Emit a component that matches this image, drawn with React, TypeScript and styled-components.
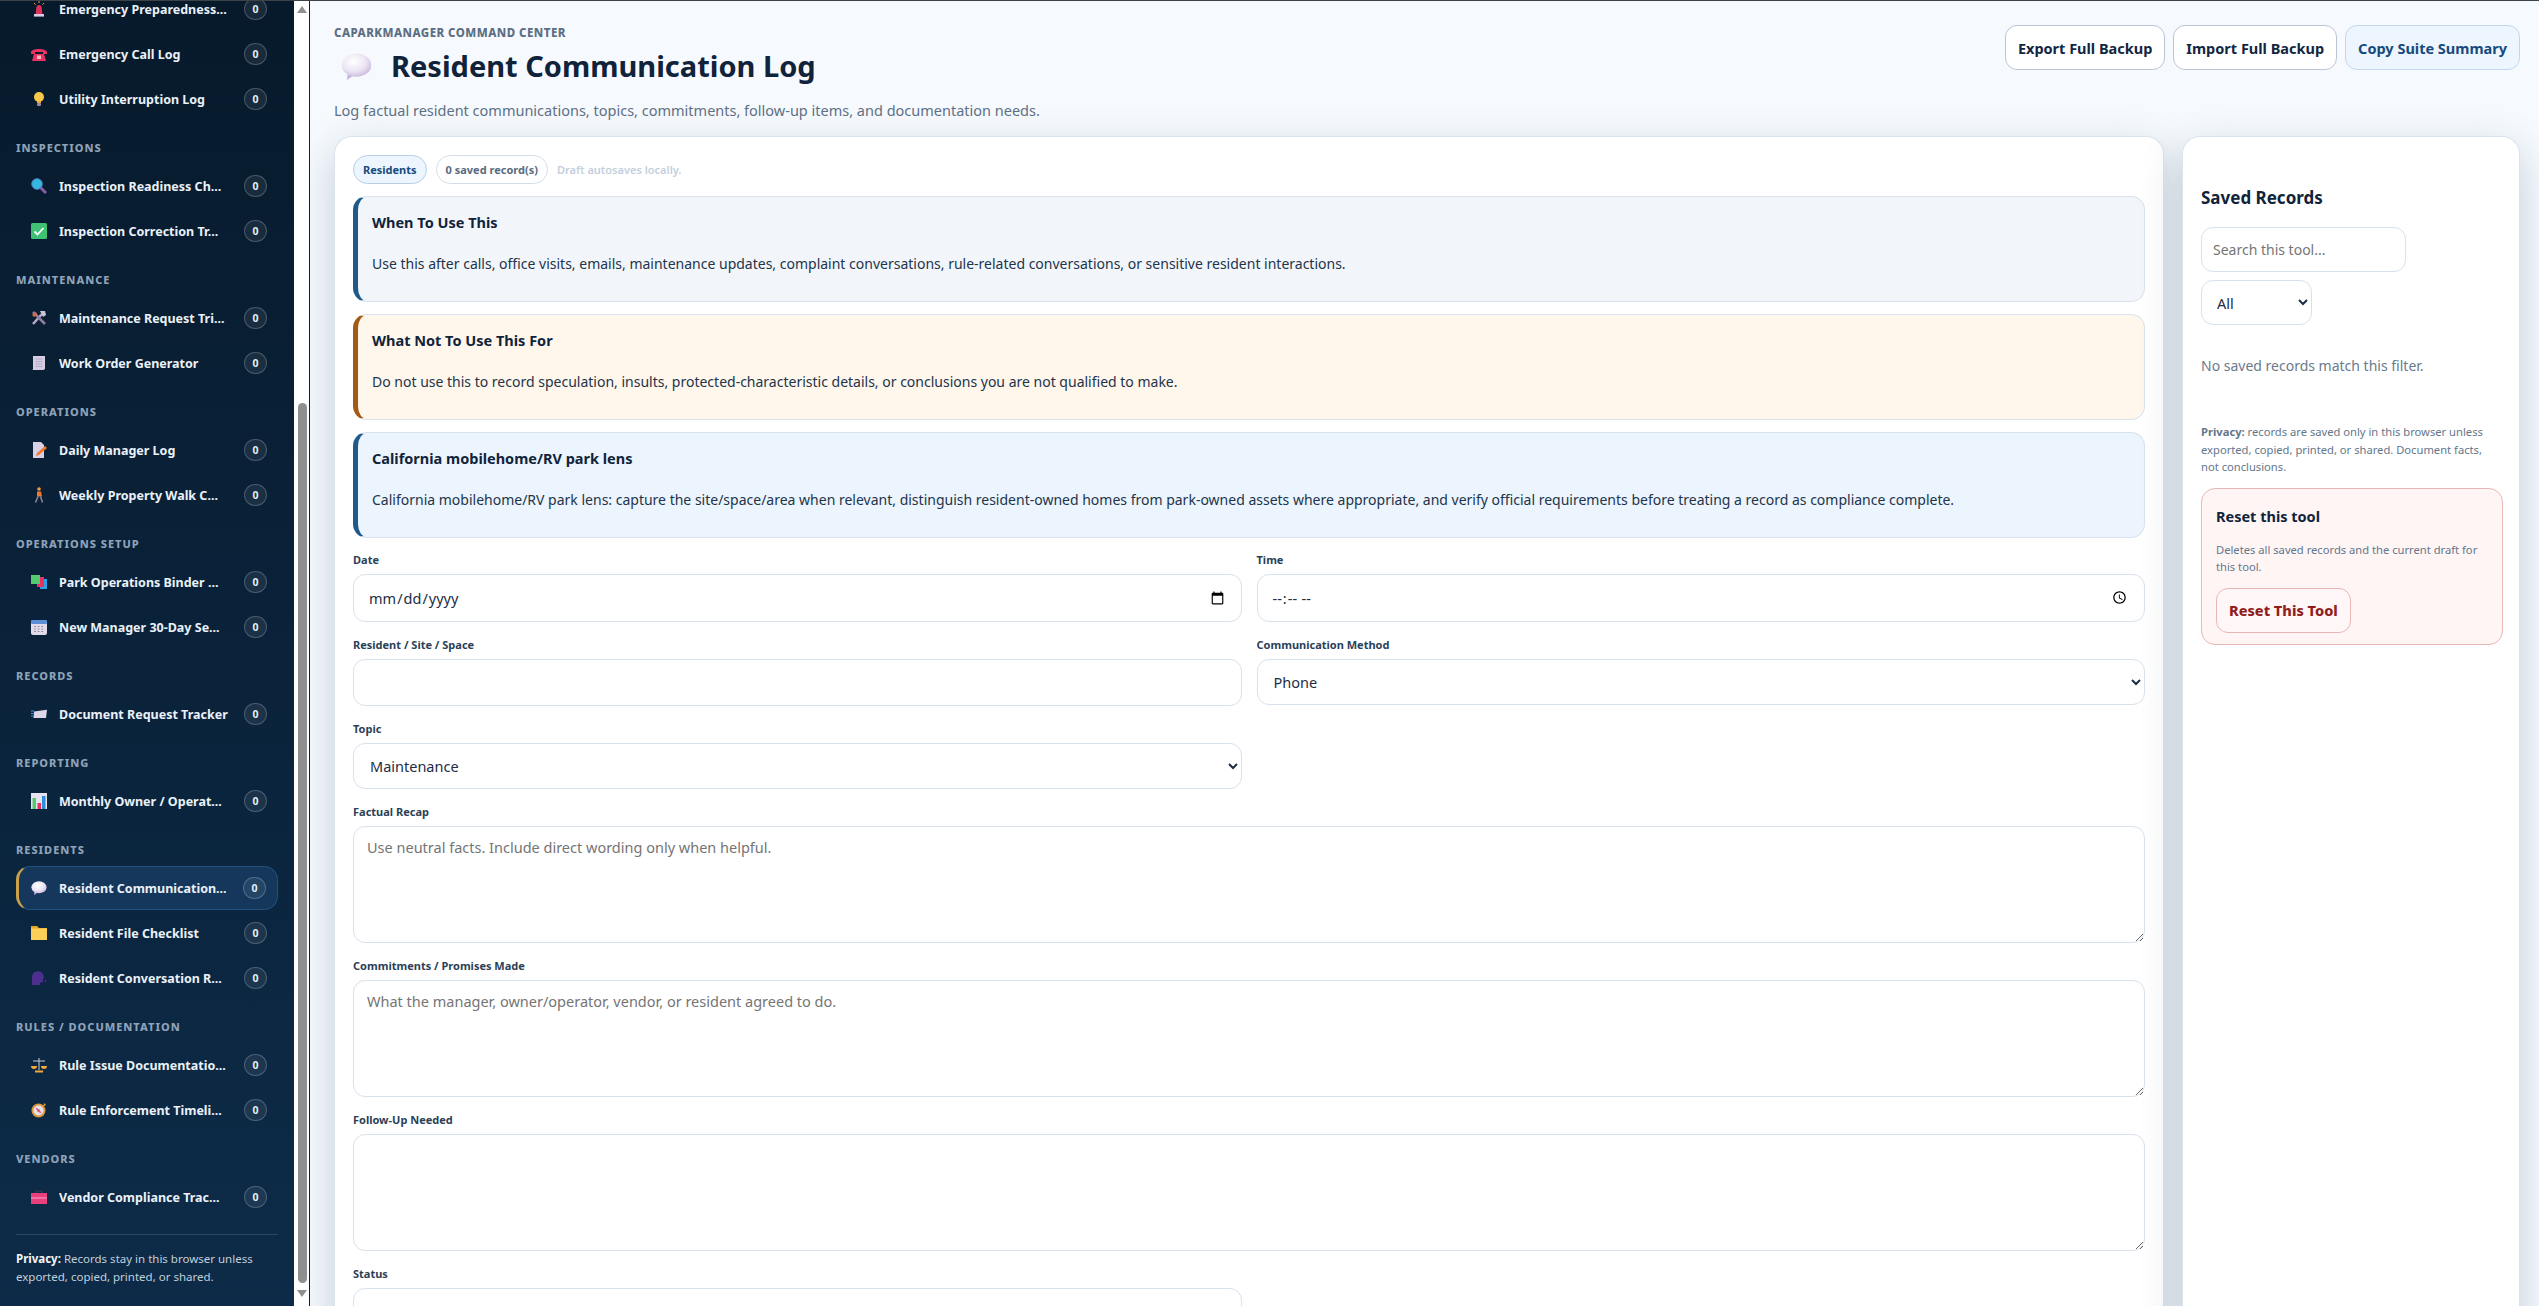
import { FC, ReactNode } from "react";
import styled, { createGlobalStyle } from "styled-components";

const FONT = `"Noto Sans", "Open Sans", Arial, sans-serif`;

const GlobalStyle = createGlobalStyle`
  * { box-sizing: border-box; }
  html, body { margin: 0; padding: 0; height: 100%; overflow: hidden; }
  body { font-family: ${FONT}; border-top: 1px solid #3c4347; background: #f6fafe; }
`;

const Shell = styled.div`
  display: flex;
  height: calc(100vh - 1px);
  overflow: hidden;
`;

const SidebarWrap = styled.aside`
  display: flex;
  width: 310px;
  flex: none;
  border-right: 1px solid #0b2036;
`;

const Sidebar = styled.div`
  width: 294px;
  flex: none;
  overflow: hidden;
  padding: 0 16px;
  background: linear-gradient(180deg, #071a2c 0%, #0d2b48 100%);
`;

const SideList = styled.nav`
  margin-top: -14px;
  display: flex;
  flex-direction: column;
`;

const SectionLabel = styled.div`
  margin: 20px 0 9px;
  font-size: 11px;
  line-height: 14px;
  font-weight: 800;
  letter-spacing: 0.09em;
  text-transform: uppercase;
  color: #8ea2b8;
`;

const NavGroup = styled.div`
  display: flex;
  flex-direction: column;
  gap: 1px;
`;

const NavItem = styled.a<{ $active?: boolean }>`
  display: flex;
  align-items: center;
  height: 44px;
  padding: 0 11px 0 ${(p) => (p.$active ? "12px" : "15px")};
  border-radius: 14px;
  border: ${(p) => (p.$active ? "1px solid #21507c" : "none")};
  border-left: ${(p) => (p.$active ? "3px solid #c9a24a" : "none")};
  background: ${(p) => (p.$active ? "#14375b" : "transparent")};
  color: #eaf1f8;
`;

const NavText = styled.span`
  flex: 1;
  min-width: 0;
  margin-left: 12px;
  font-size: 12.5px;
  font-weight: 700;
  white-space: nowrap;
  overflow: hidden;
`;

const CountBadge = styled.span`
  flex: none;
  width: 23px;
  height: 22px;
  display: flex;
  align-items: center;
  justify-content: center;
  border-radius: 11px;
  border: 1px solid rgba(255, 255, 255, 0.2);
  background: rgba(255, 255, 255, 0.07);
  font-size: 10.5px;
  font-weight: 700;
  color: #e6edf5;
`;

const SideFooter = styled.div`
  margin-top: 15px;
  padding-top: 15px;
  border-top: 1px solid #2a4663;
  font-size: 11.5px;
  line-height: 18px;
  color: #c3cfdb;

  strong { color: #f3f6fa; }
`;

const ScrollRail = styled.div`
  width: 15px;
  flex: none;
  background: #fff;
  display: flex;
  flex-direction: column;
  align-items: center;
  padding: 5px 0 0 1px;
`;

const ScrollArrow = styled.span<{ $down?: boolean }>`
  width: 0;
  height: 0;
  border-left: 5px solid transparent;
  border-right: 5px solid transparent;
  border-${(p) => (p.$down ? "top" : "bottom")}: 7px solid #8f8f8f;
`;

const ScrollThumb = styled.span`
  width: 9px;
  height: 880px;
  margin: 390px 0 7px;
  border-radius: 5px;
  background: #8f8f8f;
`;

const Main = styled.main`
  flex: 1;
  min-width: 0;
  overflow: hidden;
  padding: 24px 19px 0 24px;
  background: #f6fafe;
`;

const PageHeader = styled.header`
  display: flex;
  justify-content: space-between;
  align-items: flex-start;
  margin-bottom: 16px;
`;

const Kicker = styled.div`
  font-size: 11.5px;
  line-height: 16px;
  font-weight: 800;
  letter-spacing: 0.04em;
  text-transform: uppercase;
  color: #5d6f84;
`;

const TitleRow = styled.div`
  display: flex;
  align-items: center;
  gap: 19px;
  margin: 5px 0 14px 7px;
`;

const PageTitle = styled.h1`
  margin: 0;
  font-size: 29px;
  line-height: 40px;
  font-weight: 700;
  color: #10233a;
`;

const Subtitle = styled.p`
  margin: 0;
  font-size: 14.5px;
  line-height: 20px;
  color: #5f7186;
`;

const HeaderActions = styled.div`
  display: flex;
  gap: 8px;
`;

const ActionButton = styled.button<{ $primary?: boolean }>`
  height: 45px;
  padding: 0 12px;
  border-radius: 12px;
  border: 1px solid ${(p) => (p.$primary ? "#c3d7ec" : "#b9c5d5")};
  background: ${(p) => (p.$primary ? "#edf5fe" : "#fff")};
  color: ${(p) => (p.$primary ? "#174a7c" : "#13263f")};
  font-family: ${FONT};
  font-size: 14.5px;
  font-weight: 700;
`;

const Columns = styled.div`
  display: grid;
  grid-template-columns: 1fr 338px;
  gap: 18px;
`;

const Card = styled.section`
  min-height: 1300px;
  padding: 18px;
  background: #fff;
  border: 1px solid #dbe3ec;
  border-bottom: none;
  border-radius: 18px 18px 0 0;
  box-shadow: 0 14px 40px rgba(20, 45, 75, 0.22);
`;

const PillRow = styled.div`
  display: flex;
  align-items: center;
  gap: 9px;
  margin-bottom: 12px;
`;

const Pill = styled.span<{ $accent?: boolean }>`
  height: 29px;
  display: flex;
  align-items: center;
  padding: 0 9px;
  border-radius: 15px;
  border: 1px solid ${(p) => (p.$accent ? "#b7cfe6" : "#d5dee8")};
  background: ${(p) => (p.$accent ? "#edf5fe" : "#fff")};
  color: ${(p) => (p.$accent ? "#174a7c" : "#5a6b7f")};
  font-size: 11px;
  font-weight: 700;
`;

const Hint = styled.span`
  font-size: 11px;
  font-weight: 600;
  color: #c3d0dd;
`;

const Callout = styled.div<{ $bg: string; $edge: string }>`
  height: 106px;
  margin-bottom: 12px;
  padding: 14px 18px 0 14px;
  border-radius: 14px;
  border: 1px solid #d9e3ee;
  border-left: 5px solid ${(p) => p.$edge};
  background: ${(p) => p.$bg};

  h3 {
    margin: 0 0 21px;
    font-size: 14.5px;
    line-height: 22px;
    font-weight: 700;
    color: #10233a;
  }

  p {
    margin: 0;
    font-size: 14px;
    line-height: 20px;
    color: #22344a;
  }
`;

const FormGrid = styled.div`
  display: grid;
  grid-template-columns: 1fr 1fr;
  column-gap: 15px;
  row-gap: 16px;
  margin-top: 15px;
`;

const Field = styled.label<{ $wide?: boolean }>`
  display: flex;
  flex-direction: column;
  grid-column: ${(p) => (p.$wide ? "1 / -1" : "auto")};
  min-width: 0;
`;

const LabelText = styled.span`
  margin-bottom: 7px;
  font-size: 11px;
  line-height: 14px;
  font-weight: 700;
  color: #2b3f58;
`;

const controlStyle = `
  width: 100%;
  border: 1px solid #d8e1ec;
  border-radius: 12px;
  background: #fff;
  color: #1c2d44;
  font-family: ${FONT};
  font-size: 14.5px;
  outline: none;
`;

const TextInput = styled.input<{ $h?: number }>`
  ${controlStyle}
  height: ${(p) => p.$h ?? 47}px;
  padding: 0 14px;
`;

const SelectBox = styled.select<{ $h?: number }>`
  ${controlStyle}
  height: ${(p) => p.$h ?? 46}px;
  padding: 0 12px;
`;

const TextArea = styled.textarea`
  ${controlStyle}
  height: 117px;
  display: block;
  padding: 10px 13px;
`;

const PanelTitle = styled.h2`
  margin: 31px 0 17px;
  font-size: 17px;
  line-height: 24px;
  font-weight: 700;
  color: #10233a;
`;

const SearchInput = styled.input`
  ${controlStyle}
  display: block;
  width: 205px;
  height: 45px;
  padding: 0 11px;
  margin-bottom: 8px;
  font-size: 14px;
`;

const FilterSelect = styled.select`
  ${controlStyle}
  display: block;
  width: 111px;
  height: 45px;
  padding: 0 11px;
`;

const EmptyNote = styled.p`
  margin: 30px 0 0;
  font-size: 14px;
  line-height: 22px;
  color: #6b7a8c;
`;

const PrivacyNote = styled.p`
  margin: 46px 0 12px;
  font-size: 11.2px;
  line-height: 17.5px;
  color: #64768a;
`;

const ResetBox = styled.div`
  width: 302px;
  height: 157px;
  padding: 15px 14px 0;
  border: 1px solid #e8b6b6;
  border-radius: 14px;
  background: #fff5f5;

  h4 {
    margin: 0 0 13px;
    font-size: 14.5px;
    line-height: 24px;
    font-weight: 700;
    color: #10233a;
  }

  p {
    margin: 0 0 12px;
    font-size: 11.2px;
    line-height: 17.5px;
    color: #64768a;
  }
`;

const ResetButton = styled.button`
  height: 45px;
  padding: 0 12px;
  border-radius: 12px;
  border: 1px solid #e8b6b6;
  background: #fff7f7;
  color: #8f1f1f;
  font-family: ${FONT};
  font-size: 14.5px;
  font-weight: 800;
`;

/* emoji drawings, the sandbox has no colour emoji font */
const Ico: FC<{ children: ReactNode; size?: number }> = ({ children, size = 16 }) => (
  <svg width={size} height={size} viewBox="0 0 16 16" style={{ flex: "none" }}>
    {children}
  </svg>
);

const Balloon: FC<{ size?: number }> = ({ size }) => (
  <Ico size={size}>
    <defs>
      <radialGradient id="bal" cx="40%" cy="35%" r="70%">
        <stop offset="0%" stopColor="#ffffff" />
        <stop offset="60%" stopColor="#ece4f4" />
        <stop offset="100%" stopColor="#c9b8de" />
      </radialGradient>
    </defs>
    <path d="M3.5 11.6 3 15l3.4-2.2z" fill="#c9b8de" />
    <ellipse cx="8" cy="7.3" rx="7.6" ry="6" fill="url(#bal)" />
  </Ico>
);

const icons: Record<string, ReactNode> = {
  siren: (
    <Ico>
      <path d="M8 0v2M3 2l1.4 1.6M13 2l-1.4 1.6" stroke="#f0a030" strokeWidth="1" />
      <path d="M4.6 13 5.4 6a2.7 2.7 0 0 1 5.2 0l.8 7z" fill="#e0305a" />
      <rect x="3" y="13" width="10" height="2.6" fill="#d8c9e6" />
    </Ico>
  ),
  phone: (
    <Ico>
      <path d="M0 6c1-4 15-4 16 0v2h-4V6H4v2H0z" fill="#e8325f" />
      <path d="M3 8h10l2 7H1z" fill="#e8325f" />
      <rect x="6" y="9.5" width="4" height="3.5" fill="#f6b8c8" />
    </Ico>
  ),
  bulb: (
    <Ico>
      <circle cx="8" cy="6" r="5" fill="#fbc84a" />
      <path d="M6 10h4v2H6z" fill="#f3a92f" />
      <rect x="6" y="12" width="4" height="3" rx="1" fill="#9a8d9c" />
    </Ico>
  ),
  magnifier: (
    <Ico>
      <path d="m9.5 9.5 5.5 5.5" stroke="#8b5aa8" strokeWidth="3" />
      <circle cx="6" cy="6" r="5.4" fill="#35b8e0" stroke="#5b6fc0" strokeWidth="0.8" />
    </Ico>
  ),
  check: (
    <Ico>
      <rect width="16" height="16" rx="1.5" fill="#3fc274" />
      <path d="m3.5 8.5 3 3 6-6.5" stroke="#fff" strokeWidth="1.8" fill="none" />
    </Ico>
  ),
  tools: (
    <Ico>
      <path d="m2 14 9-10" stroke="#b9a8c6" strokeWidth="2.6" />
      <path d="M2 2l12 12" stroke="#8d7c9c" strokeWidth="2.6" />
      <path d="M9 1h5l1 4-3 2z" fill="#d0c4dc" />
      <path d="M1 5l4-3 1 2-3 3z" fill="#e06a3a" />
    </Ico>
  ),
  receipt: (
    <Ico>
      <path d="M2 1h12v13l-1.5 1H1.5L2 14z" fill="#d6cde4" />
      <path d="M4.5 4h7M4.5 6.5h7M4.5 9h7M4.5 11.5h7" stroke="#a99dbd" strokeWidth="0.8" />
    </Ico>
  ),
  memo: (
    <Ico>
      <path d="M2 0h8l3 3v13H2z" fill="#d9d0e6" />
      <path d="m5 14 1-3 8-7 2 2-8 7z" fill="#f27a2c" />
    </Ico>
  ),
  walker: (
    <Ico>
      <circle cx="8" cy="2" r="1.8" fill="#f09a3c" />
      <path d="M6 4.5h4l1 5H6z" fill="#f2772a" />
      <path d="m7 9.5-2.5 6M9.5 9.5l2 6" stroke="#8d7f9a" strokeWidth="1.6" />
    </Ico>
  ),
  binder: (
    <Ico>
      <rect x="9" y="5" width="7" height="10" fill="#2ea0e6" />
      <rect x="6" y="3" width="7" height="10" fill="#e8325f" />
      <rect y="1" width="9" height="9" fill="#56c870" />
    </Ico>
  ),
  calendar: (
    <Ico>
      <rect y="1" width="16" height="15" rx="2" fill="#e2dcea" />
      <rect y="1" width="16" height="4" rx="1.5" fill="#5a8fd8" />
      <path d="M3 7.5h10M3 10h10M3 12.5h10" stroke="#9a8fb0" strokeWidth="1.2" strokeDasharray="2 1.6" />
    </Ico>
  ),
  envelope: (
    <Ico>
      <path d="M3 5.5 16 3.8 15 12H2.5z" fill="#dfd6ea" />
      <path d="M0 5h3M0 7.5h2.5M0 10h2" stroke="#2ea0e6" strokeWidth="1" />
    </Ico>
  ),
  chart: (
    <Ico>
      <rect width="16" height="16" fill="#e9e2ef" />
      <rect x="1.5" y="5" width="3.5" height="11" fill="#56c870" />
      <rect x="6.5" y="10" width="3.5" height="6" fill="#e8325f" />
      <rect x="11" y="3" width="3.5" height="13" fill="#2e8fd8" />
    </Ico>
  ),
  balloon: <Balloon />,
  folder: (
    <Ico>
      <path d="M0 1h6l2 2h8v2H0z" fill="#e8a928" />
      <rect y="3.5" width="16" height="11.5" fill="#fbcf58" />
    </Ico>
  ),
  head: (
    <Ico>
      <path d="M1 15V7a6 6 0 0 1 11-3l1 4-1 1v3l-3 1v2z" fill="#4d2f8f" />
      <circle cx="14.5" cy="11" r="1" fill="#4d2f8f" />
    </Ico>
  ),
  scales: (
    <Ico>
      <path d="M8 1v12M2 4h12" stroke="#c9ccd8" strokeWidth="1" />
      <path d="M0 9h6a3 3 0 0 1-6 0zM10 9h6a3 3 0 0 1-6 0z" fill="#f0a838" />
      <rect x="4" y="13.5" width="8" height="2" fill="#f0a838" />
    </Ico>
  ),
  compass: (
    <Ico>
      <circle cx="7.5" cy="8.5" r="7" fill="#dd9a3c" />
      <circle cx="7.5" cy="8.5" r="5" fill="#e5e0ea" />
      <path d="m4.5 5.5 4 2 2 4-4-2z" fill="#d85a70" />
      <path d="m13 1 2 2-3 2z" fill="#dd9a3c" />
    </Ico>
  ),
  toolbox: (
    <Ico>
      <path d="M5 4V2h6v2" stroke="#3a4050" strokeWidth="1" fill="none" />
      <rect y="4" width="16" height="11" fill="#ea3f7d" />
      <path d="M0 9h16" stroke="#f8a4c4" strokeWidth="1" />
    </Ico>
  ),
};

type NavEntry = { icon: string; text: string; active?: boolean };
type NavSection = { title?: string; items: NavEntry[] };

const sections: NavSection[] = [
  {
    items: [
      { icon: "siren", text: "Emergency Preparedness..." },
      { icon: "phone", text: "Emergency Call Log" },
      { icon: "bulb", text: "Utility Interruption Log" },
    ],
  },
  {
    title: "Inspections",
    items: [
      { icon: "magnifier", text: "Inspection Readiness Ch..." },
      { icon: "check", text: "Inspection Correction Tr..." },
    ],
  },
  {
    title: "Maintenance",
    items: [
      { icon: "tools", text: "Maintenance Request Tri..." },
      { icon: "receipt", text: "Work Order Generator" },
    ],
  },
  {
    title: "Operations",
    items: [
      { icon: "memo", text: "Daily Manager Log" },
      { icon: "walker", text: "Weekly Property Walk C..." },
    ],
  },
  {
    title: "Operations Setup",
    items: [
      { icon: "binder", text: "Park Operations Binder ..." },
      { icon: "calendar", text: "New Manager 30-Day Se..." },
    ],
  },
  { title: "Records", items: [{ icon: "envelope", text: "Document Request Tracker" }] },
  { title: "Reporting", items: [{ icon: "chart", text: "Monthly Owner / Operat..." }] },
  {
    title: "Residents",
    items: [
      { icon: "balloon", text: "Resident Communication...", active: true },
      { icon: "folder", text: "Resident File Checklist" },
      { icon: "head", text: "Resident Conversation R..." },
    ],
  },
  {
    title: "Rules / Documentation",
    items: [
      { icon: "scales", text: "Rule Issue Documentatio..." },
      { icon: "compass", text: "Rule Enforcement Timeli..." },
    ],
  },
  { title: "Vendors", items: [{ icon: "toolbox", text: "Vendor Compliance Trac..." }] },
];

const callouts = [
  {
    bg: "#f2f6fb",
    edge: "#1f5a8a",
    title: "When To Use This",
    body: "Use this after calls, office visits, emails, maintenance updates, complaint conversations, rule-related conversations, or sensitive resident interactions.",
  },
  {
    bg: "#fff7ec",
    edge: "#a35a14",
    title: "What Not To Use This For",
    body: "Do not use this to record speculation, insults, protected-characteristic details, or conclusions you are not qualified to make.",
  },
  {
    bg: "#ecf4fe",
    edge: "#1f5a8a",
    title: "California mobilehome/RV park lens",
    body: "California mobilehome/RV park lens: capture the site/space/area when relevant, distinguish resident-owned homes from park-owned assets where appropriate, and verify official requirements before treating a record as compliance complete.",
  },
];

const App: FC = () => {
  return (
    <>
      <GlobalStyle />
      <Shell>
        <SidebarWrap>
          <Sidebar>
            <SideList>
              {sections.map((section, i) => (
                <div key={i}>
                  {section.title && <SectionLabel>{section.title}</SectionLabel>}
                  <NavGroup>
                    {section.items.map((item) => (
                      <NavItem key={item.text} $active={item.active}>
                        {icons[item.icon]}
                        <NavText>{item.text}</NavText>
                        <CountBadge>0</CountBadge>
                      </NavItem>
                    ))}
                  </NavGroup>
                </div>
              ))}
              <SideFooter>
                <strong>Privacy:</strong> Records stay in this browser unless exported, copied, printed, or shared.
              </SideFooter>
            </SideList>
          </Sidebar>
          <ScrollRail>
            <ScrollArrow />
            <ScrollThumb />
            <ScrollArrow $down />
          </ScrollRail>
        </SidebarWrap>

        <Main>
          <PageHeader>
            <div>
              <Kicker>CAParkManager Command Center</Kicker>
              <TitleRow>
                <Balloon size={31} />
                <PageTitle>Resident Communication Log</PageTitle>
              </TitleRow>
              <Subtitle>Log factual resident communications, topics, commitments, follow-up items, and documentation needs.</Subtitle>
            </div>
            <HeaderActions>
              <ActionButton>Export Full Backup</ActionButton>
              <ActionButton>Import Full Backup</ActionButton>
              <ActionButton $primary>Copy Suite Summary</ActionButton>
            </HeaderActions>
          </PageHeader>

          <Columns>
            <Card>
              <PillRow>
                <Pill $accent>Residents</Pill>
                <Pill>0 saved record(s)</Pill>
                <Hint>Draft autosaves locally.</Hint>
              </PillRow>
              {callouts.map((c) => (
                <Callout key={c.title} $bg={c.bg} $edge={c.edge}>
                  <h3>{c.title}</h3>
                  <p>{c.body}</p>
                </Callout>
              ))}
              <FormGrid>
                <Field>
                  <LabelText>Date</LabelText>
                  <TextInput type="date" $h={48} />
                </Field>
                <Field>
                  <LabelText>Time</LabelText>
                  <TextInput type="time" $h={48} />
                </Field>
                <Field>
                  <LabelText>Resident / Site / Space</LabelText>
                  <TextInput type="text" />
                </Field>
                <Field>
                  <LabelText>Communication Method</LabelText>
                  <SelectBox defaultValue="Phone">
                    <option>Phone</option>
                    <option>Email</option>
                    <option>In Person</option>
                  </SelectBox>
                </Field>
                <Field>
                  <LabelText>Topic</LabelText>
                  <SelectBox defaultValue="Maintenance">
                    <option>Maintenance</option>
                    <option>Complaint</option>
                    <option>Rules</option>
                  </SelectBox>
                </Field>
                <Field $wide>
                  <LabelText>Factual Recap</LabelText>
                  <TextArea placeholder="Use neutral facts. Include direct wording only when helpful." />
                </Field>
                <Field $wide>
                  <LabelText>Commitments / Promises Made</LabelText>
                  <TextArea placeholder="What the manager, owner/operator, vendor, or resident agreed to do." />
                </Field>
                <Field $wide>
                  <LabelText>Follow-Up Needed</LabelText>
                  <TextArea />
                </Field>
                <Field>
                  <LabelText>Status</LabelText>
                  <SelectBox defaultValue="Open">
                    <option>Open</option>
                    <option>Closed</option>
                  </SelectBox>
                </Field>
              </FormGrid>
            </Card>

            <Card>
              <PanelTitle>Saved Records</PanelTitle>
              <SearchInput placeholder="Search this tool..." />
              <FilterSelect defaultValue="All">
                <option>All</option>
                <option>Open</option>
                <option>Closed</option>
              </FilterSelect>
              <EmptyNote>No saved records match this filter.</EmptyNote>
              <PrivacyNote>
                <strong>Privacy:</strong> records are saved only in this browser unless exported, copied, printed, or shared. Document facts, not conclusions.
              </PrivacyNote>
              <ResetBox>
                <h4>Reset this tool</h4>
                <p>Deletes all saved records and the current draft for this tool.</p>
                <ResetButton>Reset This Tool</ResetButton>
              </ResetBox>
            </Card>
          </Columns>
        </Main>
      </Shell>
    </>
  );
};

export default App;
